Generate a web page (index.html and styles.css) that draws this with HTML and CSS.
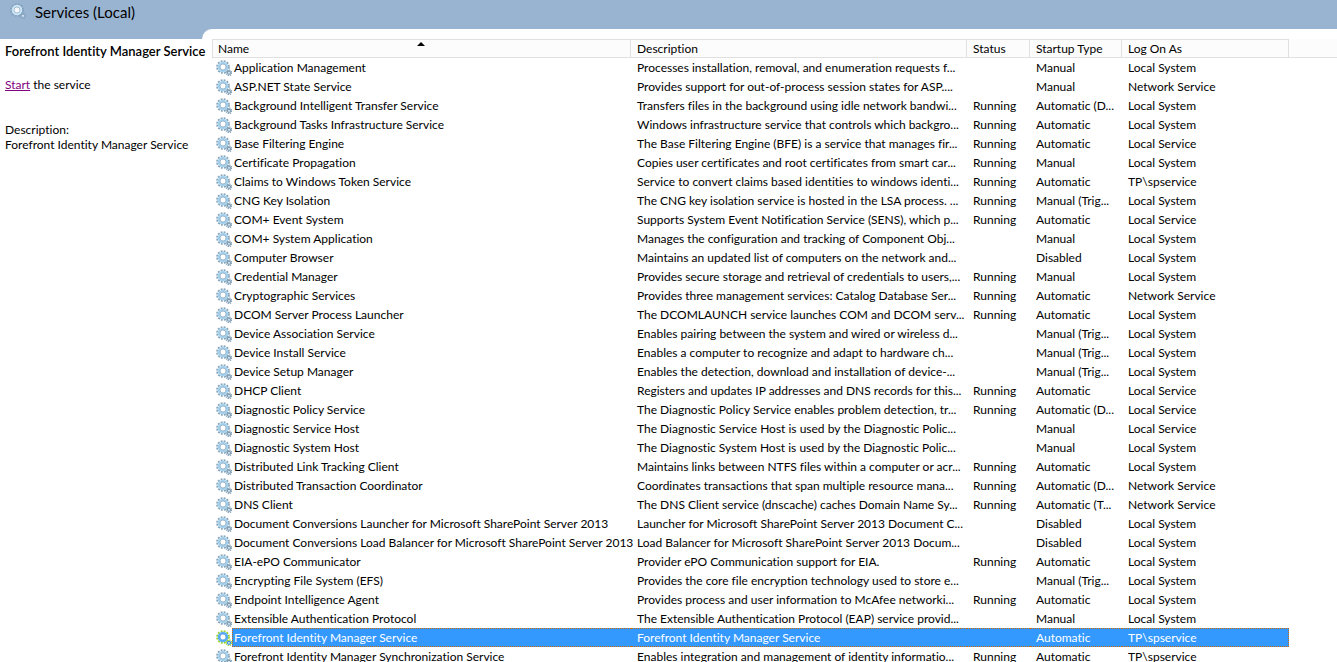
FILE: index.html
```
<!DOCTYPE html>
<html lang="en">
<head>
    <meta charset="UTF-8">
    <meta name="viewport" content="width=device-width, initial-scale=1.0">
    <title>Services</title>
    <link rel="stylesheet" href="styles.css">
</head>
<body>
    <!-- Gear shapes shared by the title and the rows -->
    <svg class="defs" aria-hidden="true">
        <symbol id="gear" viewBox="0 0 16 16">
            <circle class="teeth" cx="7" cy="7" r="5.9" fill="none" stroke-width="1.9" stroke-dasharray="1.85 1.24"/>
            <circle class="ring" cx="7" cy="7" r="4.2" fill="none" stroke-width="2.2"/>
            <circle class="edge" cx="7" cy="7" r="3" fill="#fff" stroke-width="0.7"/>
            <circle class="teeth" cx="13" cy="12.8" r="2.7" fill="none" stroke-width="1.5" stroke-dasharray="1.2 0.92"/>
            <circle class="small" cx="13" cy="12.8" r="1.5" fill="#fff" stroke-width="1.3"/>
        </symbol>
    </svg>

    <header class="title-bar">
        <svg class="gear gear-title"><use href="#gear"/></svg>
        <h1>Services (Local)</h1>
    </header>

    <div class="content">
        <!-- Details of the selected service -->
        <aside class="details">
            <h2>Forefront Identity Manager Service</h2>
            <p class="action"><a href="#">Start</a> the service</p>
            <p>Description:<br>Forefront Identity Manager Service</p>
        </aside>

        <!-- Service list -->
        <main class="list">
            <table>
                <colgroup>
                    <col class="col-icon">
                    <col class="col-name">
                    <col class="col-description">
                    <col class="col-status">
                    <col class="col-startup">
                    <col class="col-logon">
                    <col>
                </colgroup>
                <thead>
                    <tr>
                        <th class="first sorted" colspan="2" aria-sort="ascending"><button type="button">Name</button></th>
                        <th><button type="button">Description</button></th>
                        <th><button type="button">Status</button></th>
                        <th><button type="button">Startup Type</button></th>
                        <th><button type="button">Log On As</button></th>
                        <td class="filler"></td>
                    </tr>
                </thead>
                <tbody>
                    <tr><td class="icon"><svg class="gear"><use href="#gear"/></svg></td><td class="name">Application Management</td><td>Processes installation, removal, and enumeration requests f...</td><td></td><td>Manual</td><td>Local System</td></tr>
                    <tr><td class="icon"><svg class="gear"><use href="#gear"/></svg></td><td class="name">ASP.NET State Service</td><td>Provides support for out-of-process session states for ASP....</td><td></td><td>Manual</td><td>Network Service</td></tr>
                    <tr><td class="icon"><svg class="gear"><use href="#gear"/></svg></td><td class="name">Background Intelligent Transfer Service</td><td>Transfers files in the background using idle network bandwi...</td><td>Running</td><td>Automatic (D...</td><td>Local System</td></tr>
                    <tr><td class="icon"><svg class="gear"><use href="#gear"/></svg></td><td class="name">Background Tasks Infrastructure Service</td><td>Windows infrastructure service that controls which backgro...</td><td>Running</td><td>Automatic</td><td>Local System</td></tr>
                    <tr><td class="icon"><svg class="gear"><use href="#gear"/></svg></td><td class="name">Base Filtering Engine</td><td>The Base Filtering Engine (BFE) is a service that manages fir...</td><td>Running</td><td>Automatic</td><td>Local Service</td></tr>
                    <tr><td class="icon"><svg class="gear"><use href="#gear"/></svg></td><td class="name">Certificate Propagation</td><td>Copies user certificates and root certificates from smart car...</td><td>Running</td><td>Manual</td><td>Local System</td></tr>
                    <tr><td class="icon"><svg class="gear"><use href="#gear"/></svg></td><td class="name">Claims to Windows Token Service</td><td>Service to convert claims based identities to windows identi...</td><td>Running</td><td>Automatic</td><td>TP\spservice</td></tr>
                    <tr><td class="icon"><svg class="gear"><use href="#gear"/></svg></td><td class="name">CNG Key Isolation</td><td>The CNG key isolation service is hosted in the LSA process. ...</td><td>Running</td><td>Manual (Trig...</td><td>Local System</td></tr>
                    <tr><td class="icon"><svg class="gear"><use href="#gear"/></svg></td><td class="name">COM+ Event System</td><td>Supports System Event Notification Service (SENS), which p...</td><td>Running</td><td>Automatic</td><td>Local Service</td></tr>
                    <tr><td class="icon"><svg class="gear"><use href="#gear"/></svg></td><td class="name">COM+ System Application</td><td>Manages the configuration and tracking of Component Obj...</td><td></td><td>Manual</td><td>Local System</td></tr>
                    <tr><td class="icon"><svg class="gear"><use href="#gear"/></svg></td><td class="name">Computer Browser</td><td>Maintains an updated list of computers on the network and...</td><td></td><td>Disabled</td><td>Local System</td></tr>
                    <tr><td class="icon"><svg class="gear"><use href="#gear"/></svg></td><td class="name">Credential Manager</td><td>Provides secure storage and retrieval of credentials to users,...</td><td>Running</td><td>Manual</td><td>Local System</td></tr>
                    <tr><td class="icon"><svg class="gear"><use href="#gear"/></svg></td><td class="name">Cryptographic Services</td><td>Provides three management services: Catalog Database Ser...</td><td>Running</td><td>Automatic</td><td>Network Service</td></tr>
                    <tr><td class="icon"><svg class="gear"><use href="#gear"/></svg></td><td class="name">DCOM Server Process Launcher</td><td>The DCOMLAUNCH service launches COM and DCOM serv...</td><td>Running</td><td>Automatic</td><td>Local System</td></tr>
                    <tr><td class="icon"><svg class="gear"><use href="#gear"/></svg></td><td class="name">Device Association Service</td><td>Enables pairing between the system and wired or wireless d...</td><td></td><td>Manual (Trig...</td><td>Local System</td></tr>
                    <tr><td class="icon"><svg class="gear"><use href="#gear"/></svg></td><td class="name">Device Install Service</td><td>Enables a computer to recognize and adapt to hardware ch...</td><td></td><td>Manual (Trig...</td><td>Local System</td></tr>
                    <tr><td class="icon"><svg class="gear"><use href="#gear"/></svg></td><td class="name">Device Setup Manager</td><td>Enables the detection, download and installation of device-...</td><td></td><td>Manual (Trig...</td><td>Local System</td></tr>
                    <tr><td class="icon"><svg class="gear"><use href="#gear"/></svg></td><td class="name">DHCP Client</td><td>Registers and updates IP addresses and DNS records for this...</td><td>Running</td><td>Automatic</td><td>Local Service</td></tr>
                    <tr><td class="icon"><svg class="gear"><use href="#gear"/></svg></td><td class="name">Diagnostic Policy Service</td><td>The Diagnostic Policy Service enables problem detection, tr...</td><td>Running</td><td>Automatic (D...</td><td>Local Service</td></tr>
                    <tr><td class="icon"><svg class="gear"><use href="#gear"/></svg></td><td class="name">Diagnostic Service Host</td><td>The Diagnostic Service Host is used by the Diagnostic Polic...</td><td></td><td>Manual</td><td>Local Service</td></tr>
                    <tr><td class="icon"><svg class="gear"><use href="#gear"/></svg></td><td class="name">Diagnostic System Host</td><td>The Diagnostic System Host is used by the Diagnostic Polic...</td><td></td><td>Manual</td><td>Local System</td></tr>
                    <tr><td class="icon"><svg class="gear"><use href="#gear"/></svg></td><td class="name">Distributed Link Tracking Client</td><td>Maintains links between NTFS files within a computer or acr...</td><td>Running</td><td>Automatic</td><td>Local System</td></tr>
                    <tr><td class="icon"><svg class="gear"><use href="#gear"/></svg></td><td class="name">Distributed Transaction Coordinator</td><td>Coordinates transactions that span multiple resource mana...</td><td>Running</td><td>Automatic (D...</td><td>Network Service</td></tr>
                    <tr><td class="icon"><svg class="gear"><use href="#gear"/></svg></td><td class="name">DNS Client</td><td>The DNS Client service (dnscache) caches Domain Name Sy...</td><td>Running</td><td>Automatic (T...</td><td>Network Service</td></tr>
                    <tr><td class="icon"><svg class="gear"><use href="#gear"/></svg></td><td class="name">Document Conversions Launcher for Microsoft SharePoint Server 2013</td><td>Launcher for Microsoft SharePoint Server 2013 Document C...</td><td></td><td>Disabled</td><td>Local System</td></tr>
                    <tr><td class="icon"><svg class="gear"><use href="#gear"/></svg></td><td class="name">Document Conversions Load Balancer for Microsoft SharePoint Server 2013</td><td>Load Balancer for Microsoft SharePoint Server 2013 Docum...</td><td></td><td>Disabled</td><td>Local System</td></tr>
                    <tr><td class="icon"><svg class="gear"><use href="#gear"/></svg></td><td class="name">EIA-ePO Communicator</td><td>Provider ePO Communication support for EIA.</td><td>Running</td><td>Automatic</td><td>Local System</td></tr>
                    <tr><td class="icon"><svg class="gear"><use href="#gear"/></svg></td><td class="name">Encrypting File System (EFS)</td><td>Provides the core file encryption technology used to store e...</td><td></td><td>Manual (Trig...</td><td>Local System</td></tr>
                    <tr><td class="icon"><svg class="gear"><use href="#gear"/></svg></td><td class="name">Endpoint Intelligence Agent</td><td>Provides process and user information to McAfee networki...</td><td>Running</td><td>Automatic</td><td>Local System</td></tr>
                    <tr><td class="icon"><svg class="gear"><use href="#gear"/></svg></td><td class="name">Extensible Authentication Protocol</td><td>The Extensible Authentication Protocol (EAP) service provid...</td><td></td><td>Manual</td><td>Local System</td></tr>
                    <tr class="selected"><td class="icon"><svg class="gear"><use href="#gear"/></svg></td><td class="name">Forefront Identity Manager Service</td><td>Forefront Identity Manager Service</td><td></td><td>Automatic</td><td>TP\spservice</td></tr>
                    <tr><td class="icon"><svg class="gear"><use href="#gear"/></svg></td><td class="name">Forefront Identity Manager Synchronization Service</td><td>Enables integration and management of identity informatio...</td><td>Running</td><td>Automatic</td><td>TP\spservice</td></tr>
                </tbody>
            </table>
        </main>
    </div>
</body>
</html>
```
FILE: styles.css
```
* {
    box-sizing: border-box;
}
body {
    --teeth: #86a3b8;
    --ring: #a5d2ee;
    --edge: #7c9db6;
    display: flex;
    flex-direction: column;
    height: 100vh;
    margin: 0;
    overflow: hidden;
    background-color: #99b4d1;
    color: #000;
    font-family: Lato, 'Open Sans', sans-serif;
    font-size: 12px;
    font-variant-ligatures: none;
    line-height: 15px;
}
.defs {
    display: none;
}
.title-bar {
    display: flex;
    flex: none;
    gap: 9px;
    height: 29px;
    padding: 3px 10px;
}
.title-bar h1 {
    margin: 0;
    font-size: 15px;
    font-weight: 400;
    line-height: 18px;
}
.content {
    display: flex;
    flex: 1;
    min-height: 0;
}

/* Details panel, the heading may run past its right edge */
.details {
    position: relative;
    z-index: 1;
    flex: none;
    width: 202px;
    margin-top: 10px;
    padding: 5px 0 0 5px;
    background-color: #fff;
    white-space: nowrap;
}
.details h2 {
    margin: 0 0 18px;
    font-size: 13px;
    font-weight: 600;
}
.details p {
    margin: 0;
}
.details .action {
    margin-bottom: 30px;
}
.details a {
    color: #800080;
}

/* Service list */
.list {
    flex: 1;
    min-width: 0;
    padding: 10px 0 0 10px;
    background-color: #fff;
    border-top-left-radius: 10px;
    overflow: hidden;
}
table {
    width: 100%;
    table-layout: fixed;
    border-collapse: separate;
    border-spacing: 0;
}
.col-icon {
    width: 20px;
}
.col-name {
    width: 399px;
}
.col-description {
    width: 336px;
}
.col-status {
    width: 63px;
}
.col-startup {
    width: 92px;
}
.col-logon {
    width: 167px;
}
th {
    position: relative;
    height: 19px;
    padding: 0;
    background-color: #fcfcfc;
    border: 1px solid #e0e0e0;
    border-left: none;
}
th.first {
    border-left: 1px solid #e0e0e0;
}
th button {
    display: block;
    width: 100%;
    padding: 0 6px;
    border: none;
    background: none;
    color: inherit;
    font: inherit;
    font-weight: 400;
    font-variant-ligatures: none;
    line-height: 17px;
    text-align: left;
}
th.first button {
    padding-left: 5px;
}
/* Sort arrow over the column title */
th.sorted::after {
    content: "";
    position: absolute;
    top: 2px;
    left: 50%;
    margin-left: -5px;
    border: 4px solid transparent;
    border-top: none;
    border-bottom-color: #000;
}
td {
    height: 19px;
    padding: 0 0 0 6px;
    border: 1px solid transparent;
    border-width: 1px 0;
    line-height: 17px;
    white-space: nowrap;
}
td.filler {
    background-color: #fcfcfc;
    border-bottom-color: #e0e0e0;
}
td.icon {
    padding: 0 0 0 4px;
}
td.name {
    padding-left: 2px;
}
.selected td:not(.icon) {
    background-color: #39f;
    border-color: #cc6600;
    border-style: dotted;
    color: #fff;
}
.selected td.name {
    padding-left: 1px;
    border-left-width: 1px;
}
.selected td:last-child {
    border-right-width: 1px;
}
.selected .gear {
    --teeth: #9bd42a;
    --ring: #5aaef5;
    --edge: #3a8fe0;
}

/* Gear icon */
.gear {
    display: block;
    flex: none;
    width: 16px;
    height: 16px;
}
.teeth {
    stroke: var(--teeth);
}
.ring {
    stroke: var(--ring);
}
.edge, .small {
    stroke: var(--edge);
}
.gear-title {
    --teeth: #7d9dbb;
    --ring: #d3ebf8;
    --edge: #8fb0cb;
    opacity: 0.9;
}
```
